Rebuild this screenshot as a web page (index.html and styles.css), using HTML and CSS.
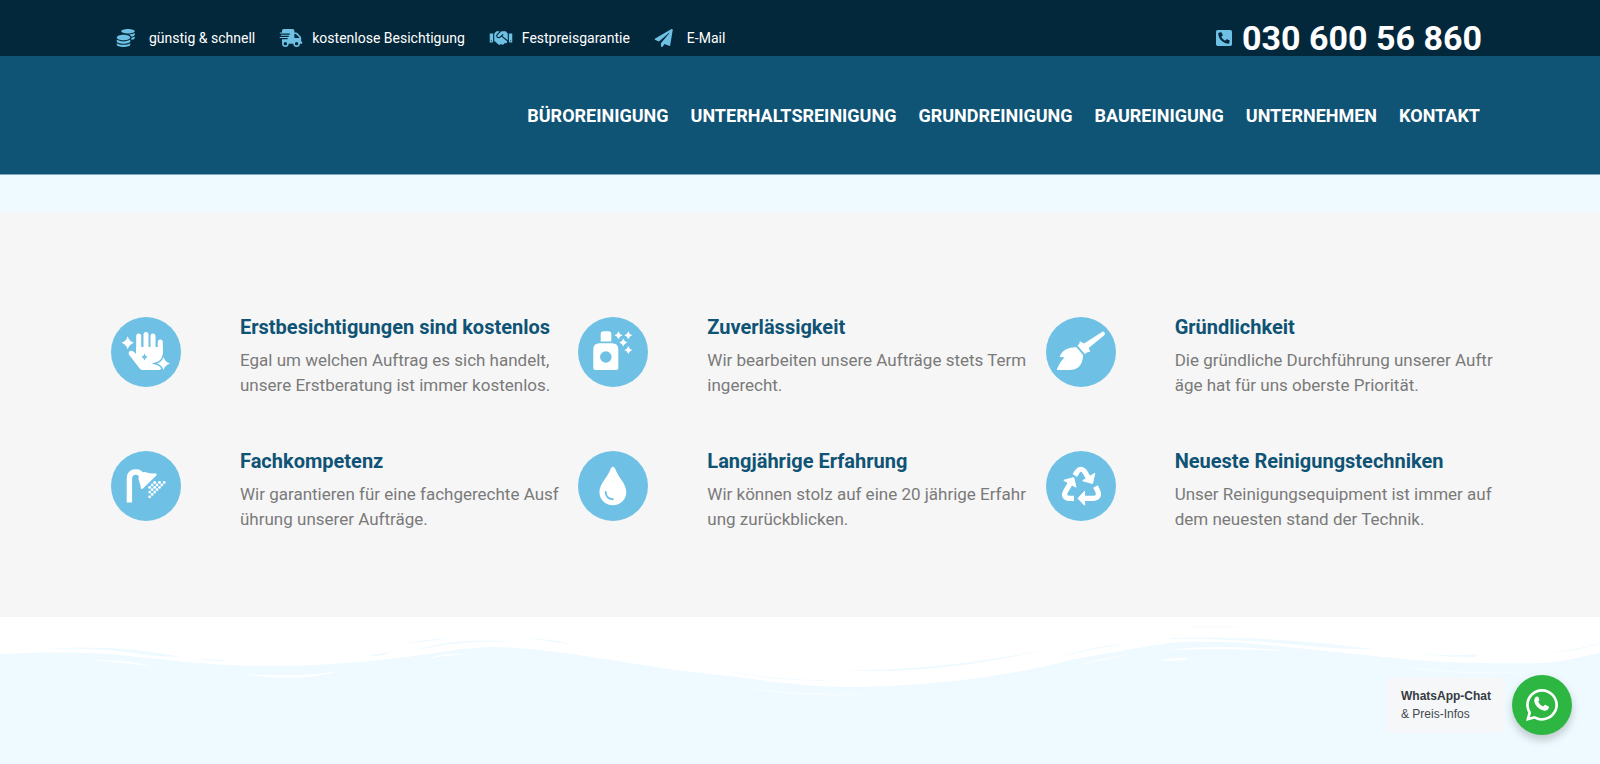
FILE: index.html
```html
<!DOCTYPE html>
<html lang="de">
<head>
    <meta charset="UTF-8">
    <meta name="viewport" content="width=device-width, initial-scale=1.0">
    <title>Gebäudereinigung</title>
    <link rel="stylesheet" href="styles.css">
</head>
<body>
    <header>
        <div class="topbar">
            <ul class="usp-list">
                <li>
                    <svg class="usp-icon" viewBox="0 0 640 512" aria-hidden="true"><path d="M0 405.3V448c0 35.3 86 64 192 64s192-28.7 192-64v-42.7C342.7 434.4 267.2 448 192 448S41.3 434.4 0 405.3zM320 128c106 0 192-28.7 192-64S426 0 320 0 128 28.7 128 64s86 64 192 64zM0 300.4V352c0 35.3 86 64 192 64s192-28.7 192-64v-51.6c-41.3 34-116.9 51.6-192 51.6S41.3 334.4 0 300.4zm416 11c57.3-11.1 96-31.7 96-55.4v-42.7c-23.2 16.4-57.3 27.6-96 34.5v63.6zM192 160C86 160 0 195.8 0 240s86 80 192 80 192-35.8 192-80-86-80-192-80zm219.3 56.3c60-10.8 100.7-32 100.7-56.3v-42.7c-35.5 25.1-96.5 38.6-160.7 41.8 29.5 14.3 51.2 33.5 60 57.2z"/></svg>
                    <span>günstig &amp; schnell</span>
                </li>
                <li>
                    <svg class="usp-icon" viewBox="0 0 640 512" aria-hidden="true"><path d="M624 352h-16V243.9c0-12.7-5.1-24.9-14.1-33.9L494 110.1c-9-9-21.2-14.1-33.9-14.1H416V48c0-26.5-21.5-48-48-48H112C85.5 0 64 21.5 64 48v48H8c-4.4 0-8 3.6-8 8v16c0 4.4 3.6 8 8 8h272c4.4 0 8 3.6 8 8v16c0 4.4-3.6 8-8 8H40c-4.4 0-8 3.6-8 8v16c0 4.4 3.6 8 8 8h208c4.4 0 8 3.6 8 8v16c0 4.4-3.6 8-8 8H8c-4.4 0-8 3.6-8 8v16c0 4.4 3.6 8 8 8h208c4.4 0 8 3.6 8 8v16c0 4.4-3.6 8-8 8H64v128c0 53 43 96 96 96s96-43 96-96h128c0 53 43 96 96 96s96-43 96-96h48c8.8 0 16-7.2 16-16v-32c0-8.8-7.2-16-16-16zM160 464c-26.5 0-48-21.5-48-48s21.5-48 48-48 48 21.5 48 48-21.5 48-48 48zm320 0c-26.5 0-48-21.5-48-48s21.5-48 48-48 48 21.5 48 48-21.5 48-48 48zm80-208H416V144h44.1l99.9 99.9V256z"/></svg>
                    <span>kostenlose Besichtigung</span>
                </li>
                <li>
                    <svg class="usp-icon" viewBox="0 0 640 512" aria-hidden="true"><path d="M434.7 64h-85.9c-8 0-15.7 3-21.6 8.4l-98.3 90c-.1.1-.2.3-.3.4-16.6 15.6-16.3 40.5-2.1 56 12.7 13.9 39.4 17.6 56.1 2.7.1-.1.3-.1.4-.2l79.9-73.2c6.5-5.9 16.7-5.5 22.6 1 6 6.5 5.5 16.6-1 22.6l-26.1 23.9L504 313.8c2.9 2.4 5.5 5 7.9 7.7V128l-54.6-54.6c-5.9-6-14.1-9.4-22.6-9.4zM544 128.2v223.9c0 17.7 14.3 32 32 32h64V128.2h-96zm48 223.9c-8.8 0-16-7.2-16-16s7.2-16 16-16 16 7.2 16 16-7.2 16-16 16zM0 384h64c17.7 0 32-14.3 32-32V128.2H0V384zm48-63.9c8.8 0 16 7.2 16 16s-7.2 16-16 16-16-7.2-16-16c0-8.9 7.2-16 16-16zm435.9 18.6L334.6 217.5l-30 27.5c-29.7 27.1-75.2 24.5-101.7-4.4-26.9-29.4-24.8-74.9 4.4-101.7L289.1 64h-83.8c-8.5 0-16.6 3.4-22.6 9.4L128 128v223.9h18.3l90.5 81.9c27.4 22.3 67.7 18.1 90-9.3l.2-.2 17.9 15.5c15.9 13 39.4 10.5 52.3-5.4l31.4-38.6 5.4 4.4c13.7 11.1 33.9 9.1 45-4.7l9.5-11.7c11.2-13.8 9.1-33.9-4.6-45.1z"/></svg>
                    <span>Festpreisgarantie</span>
                </li>
                <li>
                    <svg class="usp-icon" viewBox="0 0 640 512" aria-hidden="true"><path d="M476 3.2L12.5 270.6c-18.1 10.4-15.8 35.6 2.2 43.2L121 358.4l287.3-253.2c5.5-4.9 13.3 2.6 8.6 8.3L176 407v80.5c0 23.6 28.5 32.9 42.5 15.8L282 426l124.6 52.2c14.2 6 30.4-2.9 33-18.2l72-432C515 7.8 493.3-6.8 476 3.2z"/></svg>
                    <a href="#email">E-Mail</a>
                </li>
            </ul>
            <a class="phone" href="tel:+4903060056860">
                <svg class="phone-icon" viewBox="0 32 448 448" aria-hidden="true"><path d="M400 32H48A48 48 0 0 0 0 80v352a48 48 0 0 0 48 48h352a48 48 0 0 0 48-48V80a48 48 0 0 0-48-48zm-16.39 307.37l-15 65A15 15 0 0 1 354 416C194 416 64 286.29 64 126a15.7 15.7 0 0 1 11.63-14.61l65-15A18.23 18.23 0 0 1 144 96a16.27 16.27 0 0 1 13.79 9.09l30 70A17.9 17.9 0 0 1 189 181a17 17 0 0 1-5.5 11.61l-37.89 31a231.91 231.91 0 0 0 110.78 110.78l31-37.89A17 17 0 0 1 299 291a17.85 17.85 0 0 1 5.91 1.21l70 30A16.25 16.25 0 0 1 384 336a17.41 17.41 0 0 1-.39 3.37z"/></svg>
                <span>030 600 56 860</span>
            </a>
        </div>
        <nav class="navbar">
            <a href="#buero">BÜROREINIGUNG</a>
            <a href="#unterhalt">UNTERHALTSREINIGUNG</a>
            <a href="#grund">GRUNDREINIGUNG</a>
            <a href="#bau">BAUREINIGUNG</a>
            <a href="#unternehmen">UNTERNEHMEN</a>
            <a href="#kontakt">KONTAKT</a>
        </nav>
    </header>

    <main>
        <section class="features">
            <div class="feature">
                <svg class="feature-icon" viewBox="0 0 70 70" aria-hidden="true">
                    <!-- hand with sparkles -->
                    <path class="line" stroke-width="5" d="M27.7 19v20M35 17.5v20M42 19v20M49.3 25v15"/>
                    <path d="M25.2 30h26.6v12c-4 2-4 4-5 6 1 1 3 1.5 4 3-1 1.5-2 2-4 2H31.500c-1.5 0-2-.5-3-1.7L18.600 38.500c-2.6-3.500 1.2-6 3.800-4l2.800 2.500z"/>
                    <path d="M16.700 19.200q1.500 5 6.300 6.500-4.800 1.500-6.300 6.500-1.500-5-6.300-6.500 4.800-1.500 6.300-6.500z"/>
                    <path class="cut" stroke-width="3" d="M52.500 40q1.500 5 6.500 6.500-5 1.500-6.500 6.500-1.500-5-6.500-6.500 5-1.500 6.500-6.500z"/>
                    <path d="M52.500 40q1.500 5 6.500 6.500-5 1.500-6.500 6.500-1.500-5-6.500-6.500 5-1.500 6.500-6.500z"/>
                    <path class="hole" d="M33.500 36.500q.7 3 3.200 3.500-2.500.5-3.200 3.500-.7-3-3.200-3.500 2.500-.5 3.200-3.500z"/>
                </svg>
                <div class="feature-text">
                    <h3>Erstbesichtigungen sind kostenlos</h3>
                    <p>Egal um welchen Auftrag es sich handelt, unsere Erstberatung ist immer kostenlos.</p>
                </div>
            </div>
            <div class="feature">
                <svg class="feature-icon" viewBox="0 0 70 70" aria-hidden="true">
                    <!-- spray bottle -->
                    <path d="M22.700 24.500V17q0-2.800 2.800-2.800h5q2.800 0 2.800 2.800v7.500z"/>
                    <path d="M21.500 26.300h12.600q6.200 0 6.200 6.200V51q0 2-2 2h-21q-2 0-2-2V32.500q0-6.200 6.200-6.200z"/>
                    <circle class="hole" cx="27.800" cy="40" r="5.800"/>
                    <path d="M40.500 14.300q.8 3.200 4 4-3.200.8-4 4-.8-3.200-4-4 3.200-.8 4-4zM50.300 14.300q.8 3.200 4 4-3.200.8-4 4-.8-3.200-4-4 3.200-.8 4-4zM45.300 21.600q.8 3.200 4 4-3.200.8-4 4-.8-3.200-4-4 3.200-.8 4-4zM50.300 29q.8 3.200 4 4-3.200.8-4 4-.8-3.200-4-4 3.200-.8 4-4z"/>
                </svg>
                <div class="feature-text">
                    <h3>Zuverlässigkeit</h3>
                    <p>Wir bearbeiten unsere Aufträge stets Termingerecht.</p>
                </div>
            </div>
            <div class="feature">
                <svg class="feature-icon" viewBox="0 0 70 70" aria-hidden="true">
                    <!-- broom -->
                    <path d="M56 15q1.500-1.200 2.500.2t-.2 3L42.700 31l1.600 3.800q-2.500-.2-5.500 2.300L31.500 28.500q2.500-1.500 2.300-4.300l4.200 2.300z"/>
                    <path d="M30.500 30.300l6.700 8q-.6 7.700-4 11.200-3.700 3.500-10 3.500H11.800q-1.500 0-.7-1.500 2.600-6.600 7.400-11.300l-4.800-.2q1.300-4.700 6-7.500 5-2.500 10.800-2.200z"/>
                </svg>
                <div class="feature-text">
                    <h3>Gründlichkeit</h3>
                    <p>Die gründliche Durchführung unserer Aufträge hat für uns oberste Priorität.</p>
                </div>
            </div>
            <div class="feature">
                <svg class="feature-icon" viewBox="0 0 70 70" aria-hidden="true">
                    <!-- shower head -->
                    <path class="line butt" stroke-width="5.400" d="M18.400 51.500V28q0-7 6.500-7 4.500 0 6 4"/>
                    <path d="M28 24q2.500-4 8-2.500 4 1.500 7.500.8 3.200.2 1.800 2.200L32 37.600q-2 1.200-2.400-1.200 0-2.500-1-4.600-2-3.600-.6-7.800z"/>
                    <g>
                        <circle cx="43.700" cy="31.500" r="1.400"/><circle cx="48.500" cy="31.500" r="1.400"/><circle cx="53.200" cy="31.500" r="1.400"/>
                        <circle cx="41.200" cy="34" r="1.400"/><circle cx="46" cy="34" r="1.400"/><circle cx="50.800" cy="34" r="1.400"/>
                        <circle cx="38.700" cy="36.400" r="1.400"/><circle cx="43.700" cy="36.400" r="1.400"/><circle cx="48.500" cy="36.400" r="1.400"/>
                        <circle cx="41.200" cy="38.700" r="1.400"/><circle cx="46" cy="38.700" r="1.400"/>
                        <circle cx="38.700" cy="41.100" r="1.400"/><circle cx="43.700" cy="41.100" r="1.400"/>
                        <circle cx="41.200" cy="43.400" r="1.400"/><circle cx="38.700" cy="45.800" r="1.400"/>
                    </g>
                </svg>
                <div class="feature-text">
                    <h3>Fachkompetenz</h3>
                    <p>Wir garantieren für eine fachgerechte Ausführung unserer Aufträge.</p>
                </div>
            </div>
            <div class="feature">
                <svg class="feature-icon" viewBox="0 0 70 70" aria-hidden="true">
                    <!-- water drop -->
                    <path d="M32.800 17.500q2.100-3.600 4.300 0c2.700 8.500 11.200 15 11.200 23.500 0 7.500-6 13.300-13.400 13.300S21.400 48.500 21.400 41c0-8.500 8.700-15 11.400-23.500z"/>
                    <path class="cut" stroke-width="1.900" d="M27.700 41q.3 6.800 7 7.300"/>
                </svg>
                <div class="feature-text">
                    <h3>Langjährige Erfahrung</h3>
                    <p>Wir können stolz auf eine 20 jährige Erfahrung zurückblicken.</p>
                </div>
            </div>
            <div class="feature">
                <svg class="feature-icon" viewBox="0 0 70 70" aria-hidden="true">
                    <!-- recycling arrows -->
                    <path class="line butt" stroke-width="5.200" d="M28.800 24.500l2.500-4q3.500-4.500 7.300 0l4.400 7.500M24.500 32l-5 8.500q-3 6.300 4 6.900h4.500M49.500 35.500l2 4q3 7.300-4 7.900H38"/>
                    <path stroke="#fff" stroke-linejoin="round" d="M48.800 22.300L46.500 32.500l-9.800-2.800zM17.800 29.300l9.900-2.700 2.300 9.600zM32 47.400l6.600-7.200v14z"/>
                </svg>
                <div class="feature-text">
                    <h3>Neueste Reinigungstechniken</h3>
                    <p>Unser Reinigungsequipment ist immer auf dem neuesten stand der Technik.</p>
                </div>
            </div>
        </section>

        <section class="waves">
            <svg viewBox="0 0 1600 84" aria-hidden="true">
                <path class="foam" d="M0 0H1600V36C1580 40 1562 45 1542 46C1500 47 1440 46 1404 42L1335 35L1267 28C1230 24 1190 24 1170 26C1140 30 1100 38 1070 43C1040 52 1010 56 978 61C940 66 890 70 854 70C800 70 770 64 737 60L675 53L585 39C560 35 520 30 492 30C470 30 430 37 406 40C360 46 310 49 269 49C200 49 160 41 138 40C100 34 40 35 0 37Z"/>
                <!-- strokes above the water line -->
                <path class="water" d="M45 32Q118 27 181 40Q155 40 127 35Q92 31 45 32zM196 41L224 43V44Q208 44 196 41zM370 38L392 35Q380 40 370 39zM406 27Q425 22 448 21Q445 22 406 27zM415 33Q460 20 511 25Q462 23 415 33zM529 21Q552 22 571 27Q556 26 529 21zM719 53Q785 65 862 64Q780 66 719 53zM836 53Q935 55 1048 32Q935 59 836 53zM1060 40Q1090 29 1127 27Q1090 32 1060 40zM1170 21Q1270 18 1372 32Q1345 33 1290 27Q1220 21 1170 22zM1420 36Q1450 40 1475 37Q1481 41 1464 40Q1440 40 1420 36zM1538 38Q1570 34 1600 26V27Q1570 35 1538 38z"/>
                <!-- strokes below the water line -->
                <path class="foam" d="M93 43Q130 42 153 50Q128 46 93 43zM241 57Q300 61 339 54Q300 66 241 57zM428 42Q440 36 463 37V38Q445 38 428 42zM1160 44Q1172 40 1187 41V43Q1175 44 1160 44zM1166 33Q1225 26 1285 34Q1225 31 1166 33z"/>
                <path class="foam faint" d="M740 70Q805 78 874 77Q805 82 740 70zM1070 50Q1100 40 1134 37Q1105 44 1070 50zM1390 48Q1456 57 1528 55Q1456 60 1390 48z"/>
                <path class="mist" d="M1182 10Q1213 8 1244 10Q1213 11 1182 10z"/>
            </svg>
        </section>
    </main>

    <a class="chat" href="#whatsapp">
        <span class="chat-label"><strong>WhatsApp-Chat</strong><br>&amp; Preis-Infos</span>
        <span class="chat-button">
            <svg viewBox="0 32 448 448" aria-hidden="true"><path d="M380.9 97.1C339 55.1 283.2 32 223.9 32c-122.4 0-222 99.6-222 222 0 39.1 10.2 77.3 29.6 111L0 480l117.7-30.9c32.4 17.7 68.9 27 106.1 27h.1c122.3 0 224.1-99.6 224.1-222 0-59.3-25.2-115-67.1-157zm-157 341.6c-33.2 0-65.7-8.900-94-25.700l-6.700-4-69.800 18.300L72 359.200l-4.400-7c-18.500-29.400-28.200-63.300-28.200-98.200 0-101.700 82.800-184.500 184.600-184.500 49.300 0 95.600 19.200 130.400 54.100 34.800 34.900 56.200 81.200 56.100 130.500 0 101.800-84.900 184.600-186.600 184.600z"/><path d="M128 150q20-18 42-10l18 44q0 12-18 28 26 50 70 66 20-26 30-24l46 22q10 6 4 22-18 42-60 38-80-12-126-84-34-60-6-102z"/></svg>
        </span>
    </a>
</body>
</html>
```

FILE: styles.css
```css
/* Global styles */
* {
    margin: 0;
    padding: 0;
    box-sizing: border-box;
}

body {
    font-family: Roboto, sans-serif;
    background: #eefaff;
    min-height: 100vh;
}

a {
    color: inherit;
    text-decoration: none;
}

/* Header */
.topbar {
    display: flex;
    justify-content: space-between;
    align-items: center;
    height: 56px;
    padding: 20px 118px 0 116px;
    background: #04283b;
    color: #fff;
}

.usp-list {
    display: flex;
    gap: 24px;
    list-style: none;
    font-size: 14px;
}

.usp-list li {
    display: flex;
    align-items: center;
    gap: 9px;
}

.usp-icon {
    width: 24px;
    height: 18px;
    fill: #6ec1e4;
}

.phone {
    display: flex;
    align-items: center;
    gap: 10px;
    font-size: 34px;
    font-weight: 700;
    line-height: 36px;
}

.phone-icon {
    width: 16px;
    height: 16px;
    fill: #6ec1e4;
}

.navbar {
    display: flex;
    justify-content: flex-end;
    align-items: center;
    gap: 22px;
    height: 119px;
    padding: 0 120px;
    background: #0f5375;
    border-bottom: 1px solid #7fa6ba;
    color: #fff;
    font-size: 18px;
    font-weight: 700;
}

/* Features */
.features {
    display: grid;
    grid-template-columns: repeat(3, 1fr);
    row-gap: 52px;
    margin-top: 37px;
    padding: 104px 99px 85px;
    background: #f6f6f6;
}

.feature {
    display: flex;
    gap: 59px;
    padding: 0 5px 0 12px;
}

.feature-icon {
    flex: none;
    width: 70px;
    height: 70px;
    margin-top: 1px;
    border-radius: 50%;
    background: #6ec1e4;
    fill: #fff;
}

.feature-icon .line {
    fill: none;
    stroke: #fff;
    stroke-linecap: round;
}

.feature-icon .butt {
    stroke-linecap: butt;
}

.feature-icon .cut {
    fill: none;
    stroke: #6ec1e4;
    stroke-linecap: round;
}

.feature-icon .hole {
    fill: #6ec1e4;
}

.feature-text {
    flex: 1;
}

.feature h3 {
    margin-bottom: 10px;
    color: #0f5375;
    font-size: 20px;
    font-weight: 700;
    line-height: 22px;
}

.feature p {
    color: #7a7a7a;
    font-size: 17px;
    line-height: 25px;
    word-break: break-all;
}

/* Waves */
.waves svg {
    display: block;
    width: 100%;
}

.foam {
    fill: #fff;
}

.water {
    fill: #eefaff;
}

.faint {
    opacity: 0.5;
}

.mist {
    fill: #f9fafa;
}

/* Chat button */
.chat {
    position: fixed;
    right: 28px;
    bottom: 29px;
    display: flex;
    align-items: center;
    gap: 7px;
}

.chat-label {
    padding: 10px 14px;
    border-radius: 4px;
    background: #f5f7f9;
    color: #43474e;
    font-family: "Liberation Sans", Arial, sans-serif;
    font-size: 12px;
    line-height: 18px;
}

.chat-label strong {
    color: #363b43;
}

.chat-button {
    display: flex;
    align-items: center;
    justify-content: center;
    width: 60px;
    height: 60px;
    border-radius: 50%;
    background: #2db742;
    box-shadow: 0 5px 8px rgba(0, 0, 0, 0.2);
}

.chat-button svg {
    width: 32px;
    height: 32px;
    fill: #fff;
}
```
